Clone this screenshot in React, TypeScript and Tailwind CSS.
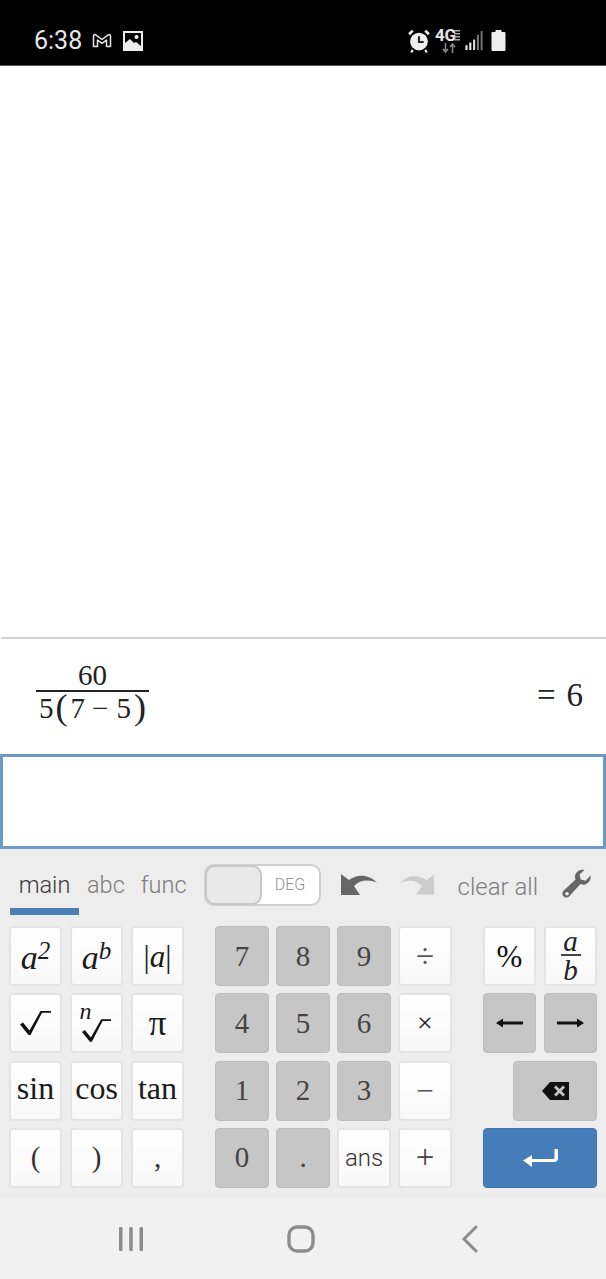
import React from "react";

const serif = "font-['Liberation_Serif',serif]";
const sans = "font-['Roboto',sans-serif]";

function Key({ kind = "w", className = "", children }: { kind?: "w" | "g" | "b"; className?: string; children?: React.ReactNode }) {
  const look =
    kind === "w"
      ? "bg-gradient-to-b from-white to-[#f8f8f8] border-2 border-[#e4e4e4] text-[#1a1a1a]"
      : kind === "g"
      ? "bg-[#c6c6c6] border border-[#bcbcbc] text-[#333]"
      : "bg-[#447db8] border border-[#3f76ae] text-white";
  return <div className={`flex items-center justify-center rounded-[4px] h-[60px] ${look} ${className}`}>{children}</div>;
}

const Sup = ({ a, b }: { a: string; b: string }) => (
  <span className={`${serif} italic text-[34px] leading-none relative top-[2px]`}>
    {a}
    <sup className="text-[25px] relative -top-[10px] align-baseline">{b}</sup>
  </span>
);

const Txt = ({ t, c = "text-[31px]" }: { t: string; c?: string }) => <span className={`${serif} ${c} leading-none`}>{t}</span>;

const Root = ({ w = 31, h = 24 }: { w?: number; h?: number }) => (
  <svg width={w} height={h} viewBox="0 0 31 24">
    <path fill="#111" d="M0 13.500l3-2 6.500 8L20.500 0H31v1.800H22L10.500 24H8.500z" />
  </svg>
);

export default function App() {
  return (
    <div className="w-[606px] h-[1279px] flex flex-col bg-white overflow-hidden">
      {/* status bar */}
      <div className="h-[66px] shrink-0 bg-black border-b border-[#555] flex items-center pt-[16px] pl-[34px] text-[#e8e8e8]">
        <span className={`${sans} text-[25px] leading-none w-[58px] shrink-0`}>6:38</span>
        <svg className="w-[20px] h-[15px] shrink-0" viewBox="0 0 20 15" fill="none" stroke="#e8e8e8" strokeWidth="1.500" strokeLinejoin="round">
          <path d="M1.500 13.500V3c0-1.200 1.200-1.800 2.200-1.100L10 6.500l6.300-4.600c1-.7 2.200-.1 2.200 1.100V13.500H14.500V7L10 10.300 5.500 7V13.500Z" />
        </svg>
        <svg className="w-[20px] h-[20px] ml-[11px] shrink-0" viewBox="0 0 20 20">
          <path fillRule="evenodd" fill="#eee" d="M0 0h20v20H0zM2 2v10l5-4 4 4 2-1 5 4V2z" />
          <circle cx="13.500" cy="6" r="2" fill="#eee" />
        </svg>
        <svg className="w-[24px] h-[25px] ml-[264px] shrink-0" viewBox="0 0 22 24" fill="none">
          <circle cx="11" cy="13" r="8.500" fill="#eee" />
          <path d="M11 8V13.500H15.500" stroke="#222" strokeWidth="2" />
          <path d="M1.500 6L5 2.500M20.500 6L17 2.500" stroke="#eee" strokeWidth="2.600" />
          <path d="M5 21l-1.500 2.500M17 21l1.500 2.500" stroke="#eee" strokeWidth="2" />
        </svg>
        <div className="w-[25px] h-[24px] ml-[4px] relative shrink-0">
          <span className={`${sans} absolute left-0 -top-[2px] text-[17px] font-bold leading-[17px] tracking-[-0.3px] text-[#e5e5e5]`}>4G</span>
          <svg className="absolute left-[19px] top-[1px] w-[6px] h-[11px]" viewBox="0 0 6 11" fill="#aaa">
            <path d="M0 0h6v1.500H0zM0 3h6v1.500H0zM0 6h6v1.500H0zM0 9h6v1.500H0z" />
          </svg>
          <svg className="absolute left-[7px] top-[14px] w-[14px] h-[10px]" viewBox="0 0 14 10" fill="none" stroke="#888" strokeWidth="1.600">
            <path d="M3.500 0v9M1 6l2.500 3L6 6M10.500 10V1M8 4l2.500-3L13 4" />
          </svg>
        </div>
        <svg className="w-[18px] h-[19px] ml-[5px] shrink-0" viewBox="0 0 18 20">
          <path fill="#eee" d="M0 15h2.200v5H0zM4 12h2.200v8H4z" />
          <path fill="#ddd" d="M8 9h2.200v11H8z" />
          <path fill="#777" d="M12 4h2.200v16H12zM16 0h2v20h-2z" />
        </svg>
        <svg className="w-[15px] h-[21px] ml-[8px] shrink-0" viewBox="0 0 14 21">
          <path fill="#eee" d="M4 0h6v2h3a1 1 0 011 1v17a1 1 0 01-1 1H1a1 1 0 01-1-1V3a1 1 0 011-1h3z" />
        </svg>
      </div>

      {/* history area */}
      <div className="h-[571px] shrink-0 bg-white" />
      <div className="h-[2px] shrink-0 bg-[#d4d4d4] ml-[1px]" />

      {/* result row */}
      <div className={`h-[115px] shrink-0 flex items-center justify-between pl-[36px] pr-[23px] text-[#222] ${serif}`}>
        <div className="w-[113px] flex flex-col items-center -mt-[9px]">
          <div className="text-[29px] leading-[30px] h-[30px]">60</div>
          <div className="w-full h-[2px] bg-[#222]" />
          <div className="text-[29px] leading-[32px] h-[32px] flex items-center whitespace-nowrap">
            <span>5</span>
            <span className="text-[36px] leading-[32px] ml-[2px] -mt-[2px]">(</span>
            <span className="ml-[3px]">7</span>
            <span className="ml-[7px]">−</span>
            <span className="ml-[8px]">5</span>
            <span className="text-[36px] leading-[32px] ml-[3px] -mt-[2px]">)</span>
          </div>
        </div>
        <div className="text-[33px] leading-none -mt-[3px] flex">
          <span>=</span>
          <span className="ml-[11px]">6</span>
        </div>
      </div>

      {/* input */}
      <div className="h-[95px] shrink-0 bg-white border-[3px] border-[#6b9ac8]" />

      {/* keyboard */}
      <div className="h-[349px] shrink-0 bg-[#ededed] flex flex-col">
        <div className={`h-[77px] shrink-0 flex ${sans} font-light text-[#7d7d7d]`}>
          <div className="w-[69px] ml-[10px] h-[66px] flex flex-col items-center">
            <div className="mt-[22px] h-[37px] text-[23.5px] leading-[28px] text-[#3c3c3c]">main</div>
            <div className="w-full h-[7px] bg-[#4a80b6]" />
          </div>
          <div className="ml-[8px] mt-[22px] text-[23.5px] leading-[28px]">abc</div>
          <div className="ml-[16px] mt-[22px] text-[23.5px] leading-[28px]">func</div>
          <div className="ml-[17px] mt-[15px] w-[117px] h-[42px] rounded-[10px] border-2 border-[#cfcfcf] bg-white flex shrink-0">
            <div className="w-[57px] -ml-[1px] -my-[1px] rounded-[10px] bg-[#e9e9e9] border-2 border-[#c8c8c8]" />
            <div className="flex-1 flex items-center justify-center text-[16px] text-[#8f8f8f]">DEG</div>
          </div>
          <svg className="ml-[19px] mt-[24px] w-[38px] h-[23px] shrink-0" viewBox="0 0 38 23">
            <path fill="#666" d="M1 1l8 6C16 2 28 0 37 10 29 6 20 7 14 13l6 9H1z" />
          </svg>
          <svg className="ml-[21px] mt-[24px] w-[36px] h-[23px] shrink-0" viewBox="0 0 38 23">
            <path fill="#cdcdcd" d="M37 1l-8 6C22 2 10 0 1 10c8-4 17-3 23 3l-6 9h19z" />
          </svg>
          <div className="ml-[23px] mt-[24px] text-[24px] leading-[28px] whitespace-nowrap">clear all</div>
          <svg className="ml-[24px] mt-[20px] w-[30px] h-[30px] shrink-0" viewBox="0 0 30 30">
            <path fill="#666" fillRule="evenodd" d="M28.500 6.500c.8 4-1.500 8-5.500 9-1.500.4-3 .2-4.500-.4L7.500 27c-2 2.200-4.500 1.700-6 .2s-1.700-4 .3-5.800L13.500 10.500c-.6-1.500-.7-3-.3-4.500 1.300-4 5.300-6 9.300-5l-5 4.500 1.200 5 5 1.200zM5 23a1.800 1.800 0 100 3.600A1.800 1.800 0 005 23z" />
          </svg>
        </div>

        <div className="flex pl-[9px]">
          <div className="w-[175px] grid grid-cols-3 gap-x-[8px] gap-y-[7.33px] shrink-0">
            <Key><Sup a="a" b="2" /></Key>
            <Key><Sup a="a" b="b" /></Key>
            <Key><span className={`${serif} text-[31px] leading-none`}>|<i>a</i>|</span></Key>
            <Key><Root /></Key>
            <Key>
              <span className="relative flex items-center w-[44px] h-[46px]">
                <i className={`${serif} absolute left-[5px] -top-[1px] text-[24px] leading-none`}>n</i>
                <span className="absolute left-[7px] top-[19px] flex"><Root w={29} h={23} /></span>
              </span>
            </Key>
            <Key><Txt t="π" c="text-[35px]" /></Key>
            <Key><span className="-mt-[4px]"><Txt t="sin" c="text-[32px]" /></span></Key>
            <Key><span className="-mt-[4px]"><Txt t="cos" c="text-[32px]" /></span></Key>
            <Key><span className="-mt-[4px]"><Txt t="tan" c="text-[32px]" /></span></Key>
            <Key><Txt t="(" c="text-[29px] text-[#333]" /></Key>
            <Key><Txt t=")" c="text-[29px] text-[#333]" /></Key>
            <Key><Txt t="," c="text-[29px] text-[#333]" /></Key>
          </div>

          <div className="ml-[31px] w-[237px] grid grid-cols-4 gap-x-[7px] gap-y-[7.33px] shrink-0">
            {["7", "8", "9"].map((n) => <Key key={n} kind="g"><Txt t={n} c="text-[29px] text-[#444]" /></Key>)}
            <Key><Txt t="÷" c="text-[33px] text-[#555]" /></Key>
            {["4", "5", "6"].map((n) => <Key key={n} kind="g"><Txt t={n} c="text-[29px] text-[#444]" /></Key>)}
            <Key><Txt t="×" c="text-[28px] text-[#222]" /></Key>
            {["1", "2", "3"].map((n) => <Key key={n} kind="g"><Txt t={n} c="text-[29px] text-[#444]" /></Key>)}
            <Key><Txt t="−" c="text-[31px] text-[#555]" /></Key>
            <Key kind="g"><Txt t="0" c="text-[29px] text-[#444]" /></Key>
            <Key kind="g"><Txt t="." c="text-[29px] text-[#444]" /></Key>
            <Key><span className={`${sans} font-light text-[24px] leading-none text-[#333]`}>ans</span></Key>
            <Key><Txt t="+" c="text-[33px] text-[#444]" /></Key>
          </div>

          <div className="ml-[31px] w-[114px] grid grid-cols-2 gap-x-[8px] gap-y-[7.33px] shrink-0">
            <Key><span className={`${serif} text-[31px] leading-none text-[#111]`}>%</span></Key>
            <Key>
              <span className={`${serif} italic text-[29px] flex flex-col items-center leading-[24px] text-[#222]`}>
                <span className="h-[25px]">a</span>
                <span className="w-[20px] h-[1.5px] bg-[#444]" />
                <span className="h-[27px] leading-[29px]">b</span>
              </span>
            </Key>
            <Key kind="g">
              <svg width="27" height="14" viewBox="0 0 27 14"><path fill="#111" d="M0 7l7-4.500v3h20v3H7v3z" /></svg>
            </Key>
            <Key kind="g">
              <svg width="27" height="14" viewBox="0 0 27 14"><path fill="#111" d="M27 7l-7-4.500v3H0v3h20v3z" /></svg>
            </Key>
            <Key kind="g" className="col-span-2 ml-[30px]">
              <svg width="27" height="18" viewBox="0 0 27 18"><path fill="#111" fillRule="evenodd" d="M8 0h19v18H8L0 9zM12 5.500l3.500 3.500-3.500 3.500 2 2 3.500-3.500 3.500 3.500 2-2L19.500 9 23 5.500l-2-2-3.500 3.500L14 3.500z" /></svg>
            </Key>
            <Key kind="b" className="col-span-2">
              <svg width="35" height="18" viewBox="0 0 35 18"><path fill="#fff" d="M31.500 0H35v9a4 4 0 01-4 4H9v5L0 11.500 9 6v4h21a1.500 1.500 0 001.500-1.500z" /></svg>
            </Key>
          </div>
        </div>
      </div>

      {/* nav bar */}
      <div className="flex-1 bg-[#f1f1f1] flex items-center pt-[1px]">
        <svg className="ml-[118px] w-[26px] h-[26px] shrink-0" viewBox="0 0 26 26" fill="#8c8c8c">
          <rect x="1" y="1" width="3.500" height="24" rx="1" />
          <rect x="11.250" y="1" width="3.500" height="24" rx="1" />
          <rect x="21.500" y="1" width="3.500" height="24" rx="1" />
        </svg>
        <svg className="ml-[143px] w-[28px] h-[28px] shrink-0" viewBox="0 0 28 28" fill="none" stroke="#8c8c8c" strokeWidth="3.400">
          <rect x="2" y="2" width="24" height="24" rx="8" />
        </svg>
        <svg className="ml-[146px] w-[18px] h-[28px] shrink-0" viewBox="0 0 18 28" fill="none" stroke="#8c8c8c" strokeWidth="3" strokeLinecap="round">
          <path d="M15 2L3 14l12 12" />
        </svg>
      </div>
    </div>
  );
}
